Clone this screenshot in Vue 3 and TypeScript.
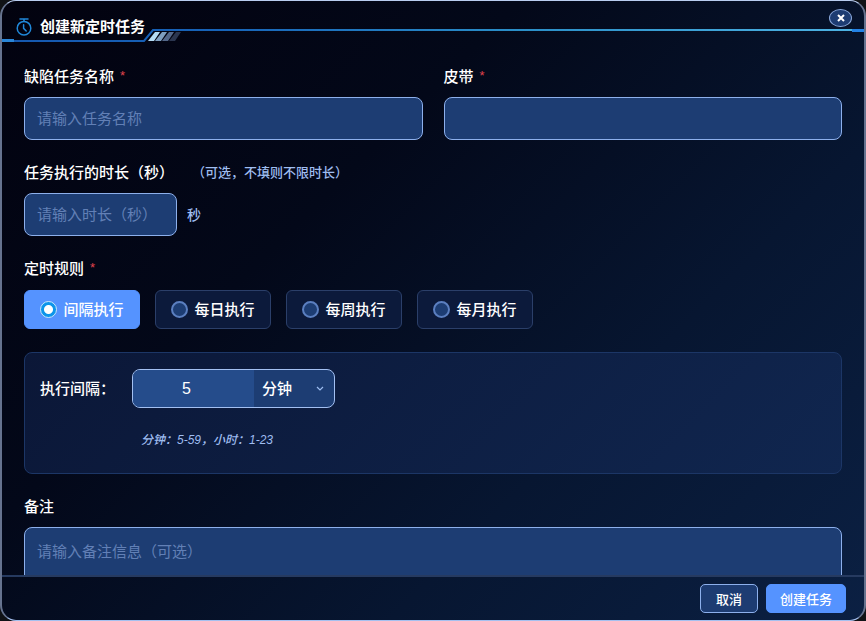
<script setup lang="ts">
import { ref } from 'vue'

interface Rule {
  value: string
  label: string
}

const rules: Rule[] = [
  { value: 'interval', label: '间隔执行' },
  { value: 'daily', label: '每日执行' },
  { value: 'weekly', label: '每周执行' },
  { value: 'monthly', label: '每月执行' },
]

const taskName = ref('')
const belt = ref('')
const duration = ref('')
const rule = ref('interval')
const interval = ref('5')
const unit = ref('minute')
const remark = ref('')
</script>

<template>
  <form class="dialog" role="dialog" aria-labelledby="dialog-title" @submit.prevent>
    <header class="header">
      <svg class="trim" aria-hidden="true">
        <defs>
          <linearGradient id="trim-line" gradientUnits="userSpaceOnUse" x1="0" y1="0" x2="866" y2="0">
            <stop offset="0" stop-color="#1557ae" />
            <stop offset="0.25" stop-color="#1763b8" />
            <stop offset="0.6" stop-color="#2b8fc8" />
            <stop offset="1" stop-color="#4fb4e4" />
          </linearGradient>
        </defs>
        <path d="M0 40H142L151 29H170" fill="none" stroke="url(#trim-line)" stroke-width="2" />
        <rect x="169" y="28" width="100%" height="2" fill="url(#trim-line)" />
        <rect x="0" y="38" width="12" height="3" fill="#2a85d6" />
        <path d="M153 31h5l-6 9h-6z" fill="#b4dcf5" />
        <path d="M160 31h5l-6 9h-6z" fill="#7f9fc0" />
        <path d="M167 31h5l-6 9h-6z" fill="#54688a" />
        <path d="M174 31h5l-6 9h-6z" fill="#2b3650" />
      </svg>
      <span class="trim-end" aria-hidden="true"></span>
      <svg class="timer" width="16" height="18" viewBox="0 0 16 18" aria-hidden="true">
        <g fill="none" stroke="#2087d8" stroke-width="1.5" stroke-linecap="round">
          <circle cx="8" cy="10.2" r="6.8" />
          <path d="M4 1h8M8 1v2.4M7.6 6.8v3.6l2.6 2.6" />
        </g>
      </svg>
      <h1 id="dialog-title" class="title">创建新定时任务</h1>
      <button class="close" type="button" aria-label="关闭">
        <svg width="8" height="8" viewBox="0 0 8 8" aria-hidden="true">
          <path d="M1 1l6 6M7 1L1 7" stroke="#fff" stroke-width="2" />
        </svg>
      </button>
    </header>

    <main class="body">
      <div class="columns">
        <div class="field">
          <label class="label" for="task-name">缺陷任务名称<span class="star">*</span></label>
          <input id="task-name" v-model="taskName" class="control" type="text" placeholder="请输入任务名称" />
        </div>
        <div class="field">
          <label class="label" for="belt">皮带<span class="star">*</span></label>
          <input id="belt" v-model="belt" class="control" type="text" />
        </div>
      </div>

      <div class="field">
        <div class="label-row">
          <label class="label" for="duration">任务执行的时长（秒）</label>
          <span class="note">（可选，不填则不限时长）</span>
        </div>
        <div class="duration">
          <input id="duration" v-model="duration" class="control short" type="text" placeholder="请输入时长（秒）" />
          <span class="suffix">秒</span>
        </div>
      </div>

      <fieldset class="field rules">
        <legend class="label">定时规则<span class="star">*</span></legend>
        <div class="choices">
          <label v-for="item in rules" :key="item.value" class="choice" :class="{ active: rule === item.value }">
            <input v-model="rule" class="radio" type="radio" name="rule" :value="item.value" />
            {{ item.label }}
          </label>
        </div>
      </fieldset>

      <section class="panel">
        <div class="interval">
          <label class="interval-label" for="interval">执行间隔：</label>
          <div class="combo">
            <input id="interval" v-model="interval" class="amount" type="text" />
            <div class="unit">
              <select v-model="unit" class="unit-select" aria-label="单位">
                <option value="minute">分钟</option>
                <option value="hour">小时</option>
              </select>
              <svg class="caret" width="8" height="6" viewBox="0 0 8 6" aria-hidden="true">
                <path d="M1 1l3 3 3-3" fill="none" stroke="#9dbdf0" stroke-width="1.2" />
              </svg>
            </div>
          </div>
        </div>
        <p class="tip">分钟：5-59，小时：1-23</p>
      </section>

      <div class="field">
        <label class="label" for="remark">备注</label>
        <textarea id="remark" v-model="remark" class="control area" placeholder="请输入备注信息（可选）"></textarea>
      </div>
    </main>

    <footer class="footer">
      <button class="button" type="button">取消</button>
      <button class="button primary" type="submit">创建任务</button>
    </footer>
  </form>
</template>

<style>
body {
  background: #101216;
}
</style>

<style scoped>
.dialog,
.dialog * {
  box-sizing: border-box;
}
input,
select,
textarea,
button {
  margin: 0;
  color: inherit;
  font-family: inherit;
}
.dialog {
  display: flex;
  flex-direction: column;
  height: 100vh;
  overflow: hidden;
  border: solid #66738f;
  border-width: 1px 2px;
  border-top-color: #b9cdf0;
  border-bottom-color: #a5c0ef;
  border-radius: 16px;
  background: linear-gradient(135deg, #02020f 0%, #030819 35%, #071631 68%, #0b2043 100%);
  color: #fff;
  font-family: "Liberation Sans", "Noto Sans CJK SC", sans-serif;
  font-size: 15px;
}
.header {
  position: relative;
  display: flex;
  flex: none;
  align-items: center;
  gap: 8px;
  height: 52px;
  padding: 0 12px 0 14px;
}
.trim {
  position: absolute;
  inset: 0;
  width: 100%;
  height: 100%;
}
.trim-end {
  position: absolute;
  top: 28px;
  right: 0;
  width: 12px;
  height: 3px;
  background: #2382e6;
}
.timer {
  position: relative;
}
.title {
  position: relative;
  margin: 0;
  font-size: 15px;
  font-weight: 700;
  line-height: 24px;
}
.close {
  position: relative;
  display: flex;
  align-items: center;
  justify-content: center;
  align-self: flex-start;
  width: 23px;
  height: 18px;
  margin-top: 8px;
  margin-left: auto;
  padding: 0;
  border: 1px solid #8ba9dc;
  border-radius: 50%;
  background: #1d3c72;
}
.body {
  display: flex;
  flex: 1;
  flex-direction: column;
  gap: 21px;
  min-height: 0;
  overflow: hidden;
  padding: 12px 22px 0;
}
.columns {
  display: grid;
  grid-template-columns: 1fr 1fr;
  gap: 21px;
}
.field {
  display: flex;
  flex: none;
  flex-direction: column;
  gap: 8px;
  min-width: 0;
  margin: 0;
  padding: 0;
  border: 0;
}
.label {
  padding: 0;
  font-size: 15px;
  font-weight: 500;
  line-height: 24px;
}
.star {
  margin-left: 6px;
  color: #e0444e;
  font-size: 13px;
  line-height: 1;
  vertical-align: 2px;
}
.label-row {
  display: flex;
  align-items: center;
  gap: 18px;
}
.note {
  color: #9fbdf0;
  font-size: 13px;
  font-weight: 500;
  line-height: 20px;
}
.control {
  width: 100%;
  height: 43px;
  padding: 0 12px;
  border: 1px solid #8db0ec;
  border-radius: 8px;
  outline: none;
  background: #1d3d73;
  font-size: 15px;
}
.control::placeholder {
  color: #6280b6;
  opacity: 1;
}
.duration {
  display: flex;
  align-items: center;
  gap: 10px;
}
.short {
  width: 153px;
}
.suffix {
  color: #9fbdf0;
  font-size: 14px;
  font-weight: 500;
  line-height: 20px;
}
.rules {
  display: block;
  margin-bottom: 2px;
}
.choices {
  display: flex;
  gap: 15px;
  padding-top: 9px;
}
.choice {
  display: flex;
  align-items: center;
  justify-content: center;
  gap: 6px;
  width: 116px;
  height: 39px;
  border: 1px solid #2b3f69;
  border-radius: 6px;
  background: #0c1a3b;
  font-weight: 500;
  line-height: 20px;
}
.choice.active {
  border-color: #5593ff;
  background: #5593ff;
}
.radio {
  width: 17px;
  height: 17px;
  appearance: none;
  border: 2px solid #5b7fc0;
  border-radius: 50%;
  background: #1d3d73;
}
.radio:checked {
  border: 1px solid #c8e6fb;
  background: radial-gradient(circle, #fff 0 4px, #0d95ea 5px);
}
.panel {
  flex: none;
  height: 122px;
  padding: 16px 15px;
  border: 1px solid #1c3666;
  border-radius: 8px;
  background: linear-gradient(135deg, #0b1737, #10264f);
}
.interval {
  display: flex;
  align-items: center;
  gap: 17px;
}
.interval-label {
  font-weight: 500;
  line-height: 20px;
}
.combo {
  display: flex;
  width: 203px;
  height: 39px;
  overflow: hidden;
  border: 1px solid #a3c0f2;
  border-radius: 8px;
  background: #1d3d73;
}
.amount {
  width: 121px;
  padding: 0 26px 0 12px;
  border: 0;
  outline: none;
  background: #254c8b;
  font-size: 16px;
  text-align: center;
}
.unit {
  display: flex;
  flex: 1;
  align-items: center;
  padding-right: 10px;
}
.unit-select {
  flex: 1;
  height: 100%;
  min-width: 0;
  padding: 0 0 0 8px;
  appearance: none;
  border: 0;
  outline: none;
  background: transparent;
  font-size: 15px;
  font-weight: 500;
}
.caret {
  flex: none;
  pointer-events: none;
}
.tip {
  margin: 22px 0 0 101px;
  color: #9fbdf0;
  font-size: 12px;
  font-style: italic;
  font-weight: 500;
  line-height: 20px;
}
.area {
  height: 96px;
  padding: 13px 12px;
  line-height: 22px;
  resize: none;
}
.footer {
  display: flex;
  flex: none;
  align-items: center;
  justify-content: flex-end;
  gap: 8px;
  height: 45px;
  padding: 0 18px;
  border-top: 2px solid #263a60;
}
.button {
  height: 29px;
  padding: 0 15px;
  border: 1px solid #8db0ec;
  border-radius: 5px;
  background: #1d3c72;
  font-size: 13px;
  font-weight: 500;
}
.button.primary {
  padding: 0 13px;
  border-color: #5593ff;
  background: #5593ff;
}
</style>
